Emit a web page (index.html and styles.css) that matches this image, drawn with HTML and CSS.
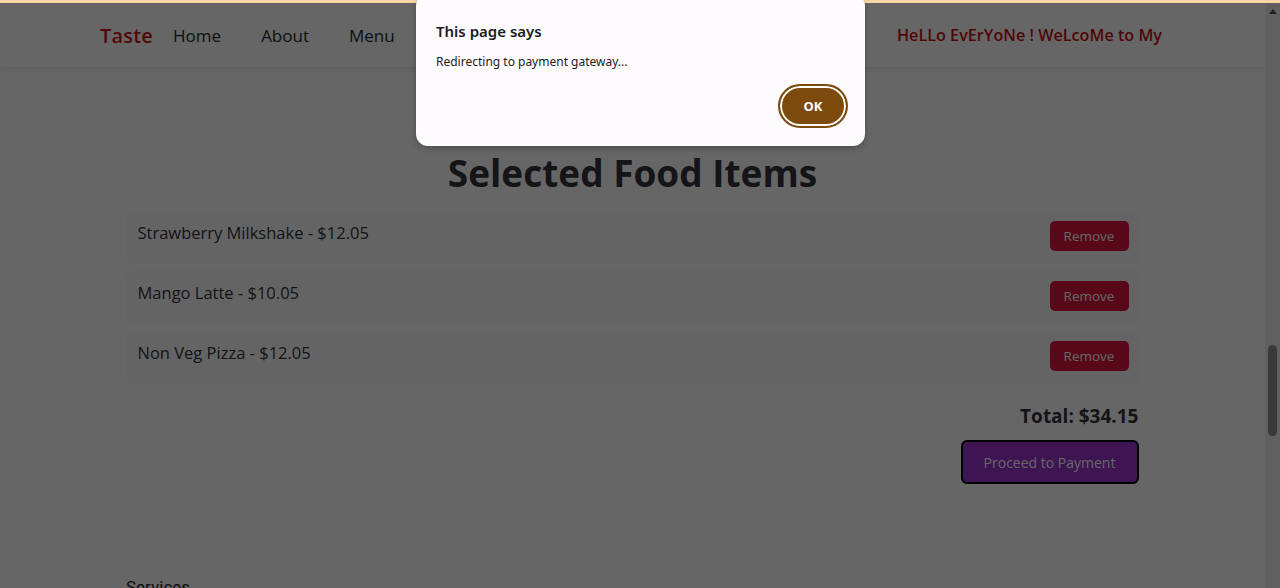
FILE: index.html
```html
<!DOCTYPE html>
<html lang="en">
<head>
<meta charset="utf-8">
<title>Taste - Cart</title>
<link rel="stylesheet" href="styles.css">
</head>
<body>
<div class="topstrip"></div>
<div class="frame">
  <div class="page">
    <header class="site-header">
      <div class="brand">Taste</div>
      <nav class="nav">
        <a href="#">Home</a>
        <a href="#">About</a>
        <a href="#">Menu</a>
        <a href="#">Services</a>
        <a href="#">Cart</a>
      </nav>
      <div class="greeting">HeLLo EvErYoNe ! WeLcoMe to My</div>
    </header>
    <main class="cart">
      <h2 class="cart-title">Selected Food Items</h2>
      <ul class="cart-list">
        <li class="cart-item"><span>Strawberry Milkshake - $12.05</span><button class="remove-btn">Remove</button></li>
        <li class="cart-item"><span>Mango Latte - $10.05</span><button class="remove-btn">Remove</button></li>
        <li class="cart-item"><span>Non Veg Pizza - $12.05</span><button class="remove-btn">Remove</button></li>
      </ul>
      <div class="total">Total: $34.15</div>
      <div class="pay-row"><button class="pay-btn">Proceed to Payment</button></div>
    </main>
    <footer class="footer">
      <div class="footer-col">Services</div>
    </footer>
  </div>
  <div class="scrollbar">
    <div class="sb-arrow"></div>
    <div class="sb-track"><div class="sb-thumb"></div></div>
  </div>
  <div class="overlay"></div>
</div>
<div class="dialog">
  <div class="dialog-title">This page says</div>
  <div class="dialog-msg">Redirecting to payment gateway...</div>
  <div class="dialog-actions"><button class="ok-btn">OK</button></div>
</div>
</body>
</html>
```

FILE: styles.css
```css
* { box-sizing: border-box; }
html, body { margin: 0; padding: 0; }
body {
  width: 1280px;
  height: 588px;
  overflow: hidden;
  font-family: "Open Sans", "Noto Sans", sans-serif;
  background: #ffffff;
  display: flex;
  flex-direction: column;
  position: relative;
}
.topstrip {
  height: 3px;
  background: #fbd7a5;
  flex: none;
  position: relative;
  z-index: 3;
}
.frame {
  flex: 1;
  display: flex;
  position: relative;
  min-height: 0;
}
.page {
  flex: 1;
  background: #ffffff;
  overflow: hidden;
}
.site-header {
  height: 64px;
  display: flex;
  align-items: center;
  padding: 0 103px 0 100px;
  box-shadow: 0 2px 6px rgba(0,0,0,0.08);
}
.brand {
  font-family: "Open Sans", sans-serif;
  font-weight: 600;
  font-size: 20px;
  color: #c91414;
  letter-spacing: 0.2px;
}
.nav {
  display: flex;
  gap: 40px;
  margin-left: 20px;
}
.nav a {
  color: #2b2b2b;
  text-decoration: none;
  font-size: 17px;
}
.greeting {
  margin-left: auto;
  color: #c31212;
  font-weight: 600;
  font-size: 16.2px;
}
.cart {
  width: 80%;
  margin: 0 auto;
}
.cart-title {
  margin: 79px 0 11px;
  text-align: center;
  font-size: 37px;
  font-weight: 700;
  line-height: 54px;
  color: #333340;
}
.cart-list {
  list-style: none;
  margin: 0;
  padding: 0;
  display: flex;
  flex-direction: column;
  gap: 10px;
}
.cart-item {
  height: 50px;
  border-radius: 8px;
  background: #fbfbfb;
  box-shadow: 0 1px 4px rgba(0,0,0,0.06);
  display: flex;
  align-items: center;
  justify-content: space-between;
  padding: 0 10px 0 11px;
  font-size: 16.5px;
  color: #333340;
}
.cart-item span { margin-top: -7px; }
.remove-btn {
  width: 79px;
  height: 30px;
  border: none;
  border-radius: 5px;
  background: #dc143c;
  color: #ffffff;
  font-family: "Open Sans", sans-serif;
  font-size: 13.5px;
}
.total {
  margin-top: 20px;
  text-align: right;
  font-weight: 700;
  font-size: 19px;
  line-height: 30px;
  color: #333340;
}
.pay-row {
  display: flex;
  justify-content: flex-end;
  margin-top: 9px;
}
.pay-btn {
  width: 178px;
  height: 44px;
  border: 2px solid #000000;
  border-radius: 6px;
  background: #9b32cf;
  color: #ffffff;
  font-family: "Open Sans", sans-serif;
  font-size: 14px;
}
.footer {
  padding: 93px 126px 0;
}
.footer-col {
  font-family: Roboto, sans-serif;
  font-size: 17px;
  color: #222222;
}
.scrollbar {
  width: 15px;
  flex: none;
  background: #f1f1f1;
  display: flex;
  flex-direction: column;
  align-items: center;
}
.sb-arrow {
  width: 0;
  height: 0;
  margin-top: 6px;
  border-left: 4px solid transparent;
  border-right: 4px solid transparent;
  border-bottom: 5px solid #505050;
}
.sb-track {
  flex: 1;
  width: 100%;
  display: flex;
  justify-content: center;
  padding-top: 331px;
}
.sb-thumb {
  width: 9px;
  height: 91px;
  border-radius: 5px;
  background: #8f8f8f;
}
.overlay {
  position: absolute;
  inset: 0;
  background: rgba(0,0,0,0.6);
  z-index: 2;
}
.dialog {
  position: absolute;
  top: -6px;
  left: 416px;
  width: 449px;
  height: 152px;
  background: #fefbfe;
  border-radius: 12px;
  box-shadow: 0 2px 6px rgba(0,0,0,0.25);
  z-index: 5;
  padding: 25px 17px 0 20px;
  font-family: "Noto Sans", "Open Sans", sans-serif;
  color: #1c1c1c;
  display: flex;
  flex-direction: column;
}
.dialog-title {
  font-size: 15px;
  font-weight: 600;
  line-height: 24px;
}
.dialog-msg {
  font-size: 12px;
  margin-top: 10px;
  line-height: 17px;
}
.dialog-actions {
  display: flex;
  justify-content: flex-end;
  margin-top: 14px;
}
.ok-btn {
  width: 70px;
  height: 44px;
  border-radius: 22px;
  background: #7c4a0c;
  border: 2px solid #7c4a0c;
  box-shadow: inset 0 0 0 2px #ffffff;
  color: #ffffff;
  font-family: "Noto Sans", sans-serif;
  font-weight: 700;
  font-size: 13px;
}
```
